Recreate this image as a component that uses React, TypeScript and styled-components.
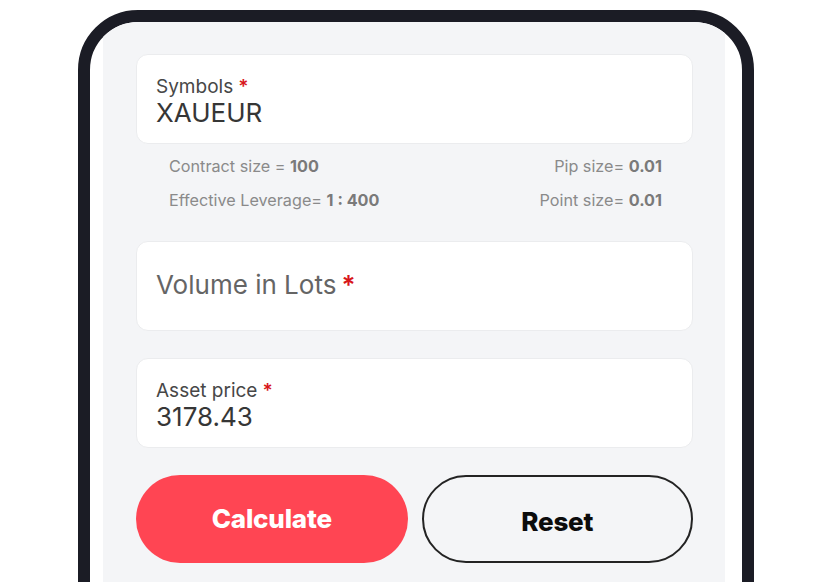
import React from 'react'
import styled, { createGlobalStyle } from 'styled-components'

const GlobalStyle = createGlobalStyle`
    html, body {
        margin: 0;
        padding: 0;
        background: #ffffff;
        overflow: hidden;
    }
    body {
        font-family: Inter, "Noto Sans", "Liberation Sans", sans-serif;
    }
`

const Page = styled.div`
    width: 832px;
    height: 582px;
    padding: 10px 0 0 78px;
    box-sizing: border-box;
    overflow: hidden;
`

const PhoneFrame = styled.div`
    width: 676px;
    height: 640px;
    box-sizing: border-box;
    border: 12px solid #1b1c25;
    border-radius: 60px 60px 0 0;
    background: #ffffff;
    overflow: hidden;
    display: flex;
    padding: 0 17px 0 13px;
`

const Screen = styled.div`
    flex: 1;
    background: #f4f5f7;
    padding: 32px 32px 0 33px;
    display: flex;
    flex-direction: column;
`

const FieldCard = styled.div<{ centered?: boolean }>`
    height: 90px;
    box-sizing: border-box;
    background: #ffffff;
    border: 1px solid #ebecee;
    border-radius: 12px;
    padding: ${props => props.centered ? "0 19px" : "20px 19px 0"};
    display: flex;
    flex-direction: column;
    justify-content: ${props => props.centered ? "center" : "flex-start"};
`

const Label = styled.div`
    font-size: 19px;
    line-height: 24px;
    color: #474747;
`

const Placeholder = styled.div`
    font-size: 26px;
    line-height: 30px;
    color: #656565;
    padding-bottom: 2px;
`

const Required = styled.span`
    color: #d8161b;
    margin-left: 5px;
    font-weight: 600;
`

const Value = styled.div`
    font-size: 26px;
    line-height: 30px;
    color: #363636;
    margin-top: -1px;
`

const InfoGrid = styled.div`
    display: grid;
    grid-template-columns: 1fr auto;
    align-content: start;
    row-gap: 15px;
    padding: 13px 31px 0 33px;
    height: 97px;
    box-sizing: border-box;
`

const InfoItem = styled.div<{ right?: boolean }>`
    font-size: 16.2px;
    line-height: 19px;
    color: #8a8a8a;
    text-align: ${props => props.right ? "right" : "left"};

    b {
        color: #7a7a7a;
        font-weight: 700;
    }
`

const Spacer = styled.div<{ size: number }>`
    height: ${props => props.size}px;
    flex-shrink: 0;
`

const ButtonRow = styled.div`
    display: grid;
    grid-template-columns: 1fr 1fr;
    gap: 14px;
`

const ActionButton = styled.button<{ primary?: boolean }>`
    height: 88px;
    border-radius: 44px;
    box-sizing: border-box;
    font-family: Inter, "Noto Sans", "Liberation Sans", sans-serif;
    font-size: 26px;
    font-weight: 800;
    letter-spacing: -0.2px;
    cursor: pointer;
    background: ${props => props.primary ? "#ff4553" : "transparent"};
    color: ${props => props.primary ? "#ffffff" : "#0c0c0c"};
    border: ${props => props.primary ? "none" : "2px solid #232323"};
    padding-top: ${props => props.primary ? "0" : "6px"};
`

const App: React.FunctionComponent = () => {
    return (
        <Page>
            <GlobalStyle />
            <PhoneFrame>
                <Screen>
                    <FieldCard>
                        <Label>Symbols<Required>*</Required></Label>
                        <Value>XAUEUR</Value>
                    </FieldCard>
                    <InfoGrid>
                        <InfoItem>Contract size = <b>100</b></InfoItem>
                        <InfoItem right>Pip size= <b>0.01</b></InfoItem>
                        <InfoItem>Effective Leverage= <b>1 : 400</b></InfoItem>
                        <InfoItem right>Point size= <b>0.01</b></InfoItem>
                    </InfoGrid>
                    <FieldCard centered>
                        <Placeholder>Volume in Lots<Required>*</Required></Placeholder>
                    </FieldCard>
                    <Spacer size={27} />
                    <FieldCard>
                        <Label>Asset price<Required>*</Required></Label>
                        <Value>3178.43</Value>
                    </FieldCard>
                    <Spacer size={27} />
                    <ButtonRow>
                        <ActionButton primary>Calculate</ActionButton>
                        <ActionButton>Reset</ActionButton>
                    </ButtonRow>
                </Screen>
            </PhoneFrame>
        </Page>
    )
}

export default App
